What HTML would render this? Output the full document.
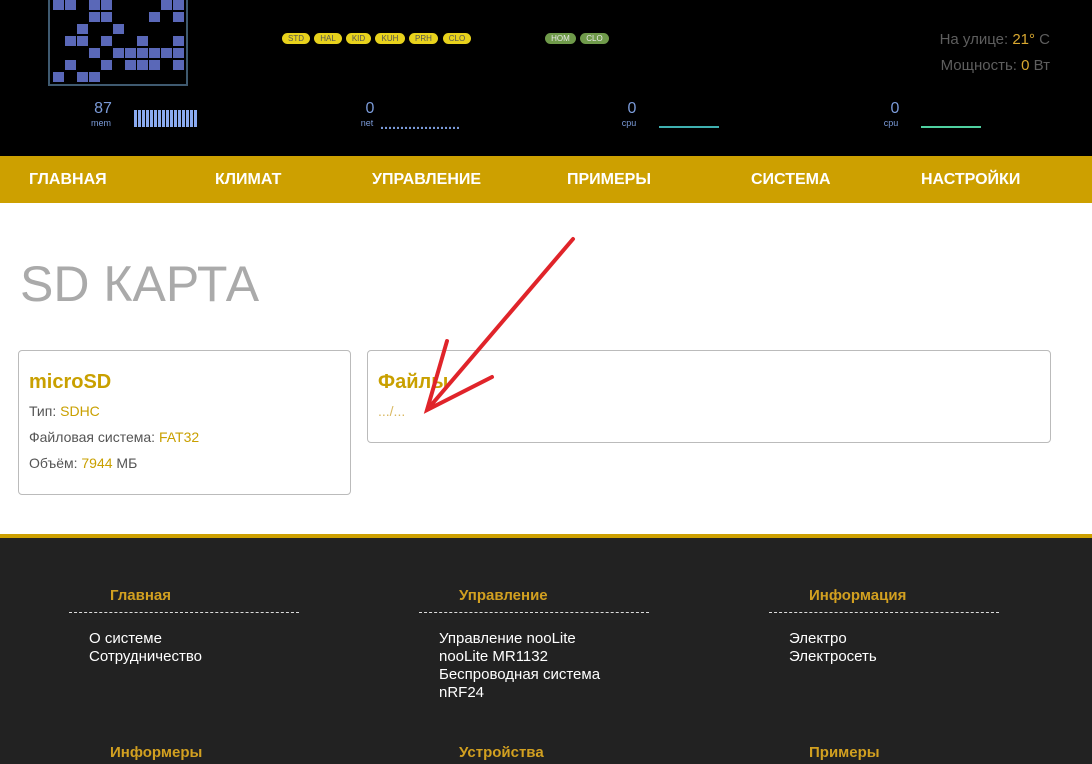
<!DOCTYPE html><html><head><meta charset="utf-8"><style>
*{margin:0;padding:0;box-sizing:border-box}
body{width:1092px;height:764px;overflow:hidden;background:#fff;font-family:"Liberation Sans",Arial,sans-serif;position:relative}
.a{position:absolute}
.hdr{left:0;top:0;width:1092px;height:156px;background:#000}
.sq{position:absolute;width:11px;height:10px;background:#5a68b8}
.pill{position:absolute;top:33px;height:11px;border-radius:6px;font-size:8px;line-height:11px;text-align:center;color:#555}
.y{background:#e8d21c}
.g{background:#6f9a4a;color:#e8e8e8}
.num{color:#7a9ad8;font-size:16px;text-align:center;width:30px}
.lbl{color:#7a9ad8;font-size:9px;text-align:center;width:30px}
.nav{left:0;top:156px;width:1092px;height:47px;background:#cda000}
.nav span{position:absolute;top:15px;color:#fff;font-weight:bold;font-size:16px}
.card{border:1px solid #bbb;border-radius:4px;background:#fff}
.card h3{color:#c9a000;font-size:20px;font-weight:bold}
.card p{color:#555;font-size:14px;line-height:26px}
.card b{font-weight:normal;color:#c9a000}
.ft{left:0;top:534px;width:1092px;height:230px;background:#222;border-top:4px solid #cda000}
.fh{position:absolute;color:#d2a020;font-weight:bold;font-size:15px}
.fl{position:absolute;width:230px;border-top:1px dashed #ddd}
.fi{position:absolute;color:#fff;font-size:15px;line-height:18px}
</style></head><body>
<div class="a hdr">
<div class="a" style="left:48px;top:-2px;width:140px;height:88px;border:2px solid #3f5a70;border-top:none"></div>
<div class="a num" style="left:88px;top:100px">87</div><div class="a lbl" style="left:86px;top:118px">mem</div>
<div class="a" style="left:134px;top:110px;width:64px;height:17px;background:repeating-linear-gradient(90deg,#8aaaf0 0 3px,#000 3px 4px)"></div>
<div class="pill y" style="left:282px;width:28px">STD</div>
<div class="pill y" style="left:314px;width:28px">HAL</div>
<div class="pill y" style="left:346px;width:25px">KID</div>
<div class="pill y" style="left:375px;width:30px">KUH</div>
<div class="pill y" style="left:409px;width:29px">PRH</div>
<div class="pill y" style="left:443px;width:28px">CLO</div>
<div class="pill g" style="left:545px;width:31px">HOM</div>
<div class="pill g" style="left:580px;width:29px">CLO</div>
<div class="a num" style="left:355px;top:100px">0</div><div class="a lbl" style="left:352px;top:118px">net</div>
<div class="a" style="left:381px;top:122px;width:80px;height:7px;background:repeating-linear-gradient(90deg,#7a9ad8 0 2px,#000 2px 4px);clip-path:polygon(0 70%,100% 70%,100% 100%,0 100%)"></div>
<div class="a num" style="left:617px;top:100px">0</div><div class="a lbl" style="left:614px;top:118px">cpu</div>
<div class="a" style="left:659px;top:126px;width:60px;height:2px;background:#3fb0b0"></div>
<div class="a num" style="left:880px;top:100px">0</div><div class="a lbl" style="left:876px;top:118px">cpu</div>
<div class="a" style="left:921px;top:126px;width:60px;height:2px;background:#4fd0a0"></div>
<div class="a" style="right:42px;top:27px;color:#5e5e5e;font-size:15px;text-align:right;line-height:26px">На улице: <span style="color:#d9a830">21°</span> С<br>Мощность: <span style="color:#d9a830">0</span> Вт</div>
</div>
<div class="a nav"><span style="left:29px">ГЛАВНАЯ</span><span style="left:215px">КЛИМАТ</span><span style="left:372px">УПРАВЛЕНИЕ</span><span style="left:567px">ПРИМЕРЫ</span><span style="left:751px">СИСТЕМА</span><span style="left:921px">НАСТРОЙКИ</span></div>
<div class="a" style="left:20px;top:255px;font-size:50px;color:#aaa">SD КАРТА</div>
<div class="a card" style="left:18px;top:350px;width:333px;height:145px;padding:20px 10px"><h3>microSD</h3><p style="margin-top:4px">Тип: <b>SDHC</b><br>Файловая система: <b>FAT32</b><br>Объём: <b>7944</b> МБ</p></div>
<div class="a card" style="left:367px;top:350px;width:684px;height:93px;padding:20px 10px"><h3>Файлы</h3><p style="margin-top:4px;color:#d9b860">.../...</p></div>
<svg class="a" style="left:0;top:0" width="1092" height="764"><g stroke="#e0242a" stroke-width="4" stroke-linecap="round" fill="none"><path d="M573 239L427 410M447 341L427 410L492 377"/></g></svg>
<div class="a ft">
<div class="fh" style="left:110px;top:49px">Главная</div><div class="fl" style="left:69px;top:74px"></div>
<div class="fi" style="left:89px;top:92px">О системе<br>Сотрудничество</div>
<div class="fh" style="left:459px;top:49px">Управление</div><div class="fl" style="left:419px;top:74px"></div>
<div class="fi" style="left:439px;top:92px">Управление nooLite<br>nooLite MR1132<br>Беспроводная система<br>nRF24</div>
<div class="fh" style="left:809px;top:49px">Информация</div><div class="fl" style="left:769px;top:74px"></div>
<div class="fi" style="left:789px;top:92px">Электро<br>Электросеть</div>
<div class="fh" style="left:110px;top:206px">Информеры</div>
<div class="fh" style="left:459px;top:206px">Устройства</div>
<div class="fh" style="left:809px;top:206px">Примеры</div>
</div>
<div class="a" style="left:0;top:0">
<div class="sq" style="left:53px;top:0"></div><div class="sq" style="left:65px;top:0"></div><div class="sq" style="left:89px;top:0"></div><div class="sq" style="left:101px;top:0"></div><div class="sq" style="left:161px;top:0"></div><div class="sq" style="left:173px;top:0"></div>
<div class="sq" style="left:89px;top:12px"></div><div class="sq" style="left:101px;top:12px"></div><div class="sq" style="left:149px;top:12px"></div><div class="sq" style="left:173px;top:12px"></div>
<div class="sq" style="left:77px;top:24px"></div><div class="sq" style="left:113px;top:24px"></div>
<div class="sq" style="left:65px;top:36px"></div><div class="sq" style="left:77px;top:36px"></div><div class="sq" style="left:101px;top:36px"></div><div class="sq" style="left:137px;top:36px"></div><div class="sq" style="left:173px;top:36px"></div>
<div class="sq" style="left:89px;top:48px"></div><div class="sq" style="left:113px;top:48px"></div><div class="sq" style="left:125px;top:48px"></div><div class="sq" style="left:137px;top:48px"></div><div class="sq" style="left:149px;top:48px"></div><div class="sq" style="left:161px;top:48px"></div><div class="sq" style="left:173px;top:48px"></div>
<div class="sq" style="left:65px;top:60px"></div><div class="sq" style="left:101px;top:60px"></div><div class="sq" style="left:125px;top:60px"></div><div class="sq" style="left:137px;top:60px"></div><div class="sq" style="left:149px;top:60px"></div><div class="sq" style="left:173px;top:60px"></div>
<div class="sq" style="left:53px;top:72px"></div><div class="sq" style="left:77px;top:72px"></div><div class="sq" style="left:89px;top:72px"></div>
</div>
</body></html>
